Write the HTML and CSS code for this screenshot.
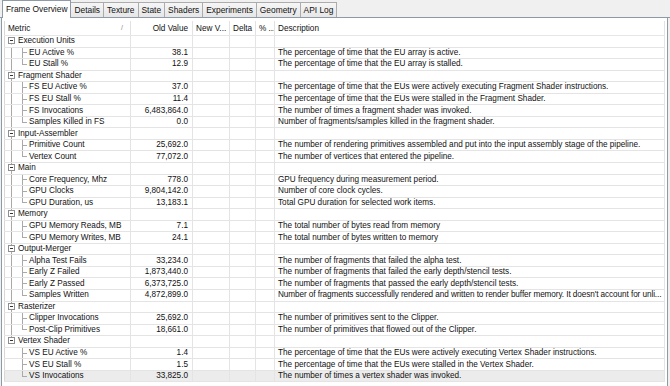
FILE: index.html
```html
<!DOCTYPE html>
<html>
<head>
  <link rel="stylesheet" href="styles.css">
</head>
<body>
  <div class="tabs">
    <div class="tab active">Frame Overview</div>
    <div class="tab">Details</div>
    <div class="tab">Texture</div>
    <div class="tab">State</div>
    <div class="tab">Shaders</div>
    <div class="tab">Experiments</div>
    <div class="tab">Geometry</div>
    <div class="tab">API Log</div>
  </div>

  <div class="panel">
    <table class="grid">
      <colgroup>
        <col class="c-metric">
        <col class="c-old">
        <col class="c-new">
        <col class="c-delta">
        <col class="c-pct">
        <col>
      </colgroup>
      <thead>
        <tr>
          <th class="metric">Metric<span class="sort">/</span></th>
          <th class="num">Old Value</th>
          <th>New V...</th>
          <th class="num">Delta</th>
          <th>% ...</th>
          <th>Description</th>
        </tr>
      </thead>
      <tbody id="rows"></tbody>
    </table>
  </div>

  <script>
    const groups = [
      ["Execution Units", [
        ["EU Active %", "38.1", "The percentage of time that the EU array is active."],
        ["EU Stall %", "12.9", "The percentage of time that the EU array is stalled."]
      ]],
      ["Fragment Shader", [
        ["FS EU Active %", "37.0", "The percentage of time that the EUs were actively executing Fragment Shader instructions."],
        ["FS EU Stall %", "11.4", "The percentage of time that the EUs were stalled in the Fragment Shader."],
        ["FS Invocations", "6,483,864.0", "The number of times a fragment shader was invoked."],
        ["Samples Killed in FS", "0.0", "Number of fragments/samples killed in the fragment shader."]
      ]],
      ["Input-Assembler", [
        ["Primitive Count", "25,692.0", "The number of rendering primitives assembled and put into the input assembly stage of the pipeline."],
        ["Vertex Count", "77,072.0", "The number of vertices that entered the pipeline."]
      ]],
      ["Main", [
        ["Core Frequency, Mhz", "778.0", "GPU frequency during measurement period."],
        ["GPU Clocks", "9,804,142.0", "Number of core clock cycles."],
        ["GPU Duration, us", "13,183.1", "Total GPU duration for selected work items."]
      ]],
      ["Memory", [
        ["GPU Memory Reads, MB", "7.1", "The total number of bytes read from memory"],
        ["GPU Memory Writes, MB", "24.1", "The total number of bytes written to memory"]
      ]],
      ["Output-Merger", [
        ["Alpha Test Fails", "33,234.0", "The number of fragments that failed the alpha test."],
        ["Early Z Failed", "1,873,440.0", "The number of fragments that failed the early depth/stencil tests."],
        ["Early Z Passed", "6,373,725.0", "The number of fragments that passed the early depth/stencil tests."],
        ["Samples Written", "4,872,899.0", "Number of fragments successfully rendered and written to render buffer memory. It doesn't account for unli...", "tight"]
      ]],
      ["Rasterizer", [
        ["Clipper Invocations", "25,692.0", "The number of primitives sent to the Clipper."],
        ["Post-Clip Primitives", "18,661.0", "The number of primitives that flowed out of the Clipper."]
      ]],
      ["Vertex Shader", [
        ["VS EU Active %", "1.4", "The percentage of time that the EUs were actively executing Vertex Shader instructions."],
        ["VS EU Stall %", "1.5", "The percentage of time that the EUs were stalled in the Vertex Shader."],
        ["VS Invocations", "33,825.0", "The number of times a vertex shader was invoked."]
      ]]
    ];

    const box = '<svg class="box" width="7" height="7" viewBox="0 0 7 7"><rect x="0.5" y="0.5" width="6" height="6" fill="#fff" stroke="#8f8f8f"/><line x1="2" y1="3.5" x2="5" y2="3.5" stroke="#333"/></svg>';
    let html = "";

    groups.forEach(function (g, gi) {
      let cls = "group";
      if (gi === 0) cls += " first";
      if (gi === groups.length - 1) cls += " last";
      html += `<tr class="${cls}"><td class="metric">${box}${g[0]}</td><td></td><td></td><td></td><td></td><td></td></tr>`;

      g[1].forEach(function (r, ri) {
        let rc = "child";
        if (ri === g[1].length - 1) rc += " end";
        if (gi === groups.length - 1) rc += " tail";
        if (gi === groups.length - 1 && ri === g[1].length - 1) rc += " selected";
        html += `<tr class="${rc}"><td class="metric">${r[0]}</td><td class="num">${r[1]}</td><td></td><td></td><td></td><td class="desc ${r[3] || ""}">${r[2]}</td></tr>`;
      });
    });

    document.getElementById("rows").innerHTML = html;
  </script>
</body>
</html>
```

FILE: styles.css
```css
body {
  margin: 0;
  width: 670px;
  height: 386px;
  overflow: hidden;
  background-color: #f0f0f0;
  font-family: "Liberation Sans", Arial, sans-serif;
  color: #111;
}

.tabs {
  display: flex;
  align-items: flex-end;
  height: 18px;
  padding-left: 2px;
  border-bottom: 1px solid #8e9aa6;
  box-sizing: border-box;
}

.tab {
  height: 15px;
  line-height: 14px;
  padding: 0 3px;
  margin-right: -1px;
  font-size: 8.4px;
  border: 1px solid #acacac;
  border-bottom: none;
  background: linear-gradient(#f6f6f6, #e6e6e6);
  box-sizing: border-box;
}

.tab.active {
  height: 18px;
  line-height: 17px;
  padding: 0 3px;
  margin-bottom: -1px;
  background: #fff;
  border-color: #8e9aa6;
  position: relative;
  z-index: 1;
}

.panel {
  height: 368px;
  margin: 0 2px 0 1px;
  border-left: 1px solid #8e9aa6;
  border-right: 1px solid #8e9aa6;
  background-color: #fff;
  padding: 3px 2px 0 2px;
  box-sizing: border-box;
}

.grid {
  width: 100%;
  table-layout: fixed;
  border-collapse: collapse;
  font-size: 8.2px;
  border-left: 1px solid #d8d8d8;
}

.c-metric { width: 126px; }
.c-old { width: 62px; }
.c-new { width: 37px; }
.c-delta { width: 26px; }
.c-pct { width: 19px; }

th {
  height: 14px;
  padding: 0 3px;
  font-weight: normal;
  text-align: left;
  white-space: nowrap;
  overflow: hidden;
  border-right: 1px solid #e2e2e2;
  border-bottom: 1px solid #e6e6e6;
}

th.num,
td.num {
  text-align: right;
  padding-right: 4px;
}

.sort {
  float: right;
  color: #888;
  font-size: 7px;
  margin-right: 4px;
}

td {
  height: 11.55px;
  padding: 0 3px;
  line-height: 10px;
  white-space: nowrap;
  overflow: hidden;
  border-right: 1px solid #e4e4e4;
  border-bottom: 1px solid #e4e4e4;
  box-sizing: border-box;
}

td.desc {
  padding-left: 3px;
}

td.tight {
  letter-spacing: -0.08px;
}

/* tree lines */
.group td.metric {
  padding-left: 3px;
  background:
    linear-gradient(#a9a9a9, #a9a9a9) 6px 0 / 1px 100% no-repeat;
}

.group.first td.metric {
  background:
    linear-gradient(#a9a9a9, #a9a9a9) 6px 50% / 1px 50% no-repeat;
}

.group.last td.metric {
  background:
    linear-gradient(#a9a9a9, #a9a9a9) 6px 0 / 1px 50% no-repeat;
}

.box {
  vertical-align: -1px;
  margin-right: 3px;
}

.child td.metric {
  padding-left: 24px;
  background:
    linear-gradient(#a9a9a9, #a9a9a9) 6px 0 / 1px 100% no-repeat,
    linear-gradient(#a9a9a9, #a9a9a9) 17px 0 / 1px 100% no-repeat,
    linear-gradient(#a9a9a9, #a9a9a9) 17px 50% / 5px 1px no-repeat;
}

.child.end td.metric {
  background:
    linear-gradient(#a9a9a9, #a9a9a9) 6px 0 / 1px 100% no-repeat,
    linear-gradient(#a9a9a9, #a9a9a9) 17px 0 / 1px 50% no-repeat,
    linear-gradient(#a9a9a9, #a9a9a9) 17px 50% / 5px 1px no-repeat;
}

.child.tail td.metric {
  background:
    linear-gradient(#a9a9a9, #a9a9a9) 17px 0 / 1px 100% no-repeat,
    linear-gradient(#a9a9a9, #a9a9a9) 17px 50% / 5px 1px no-repeat;
}

.child.tail.end td.metric {
  background:
    linear-gradient(#a9a9a9, #a9a9a9) 17px 0 / 1px 50% no-repeat,
    linear-gradient(#a9a9a9, #a9a9a9) 17px 50% / 5px 1px no-repeat;
}

.selected td {
  background-color: #ececec;
}

.child.tail.end.selected td.metric {
  background-color: #ececec;
}
```
